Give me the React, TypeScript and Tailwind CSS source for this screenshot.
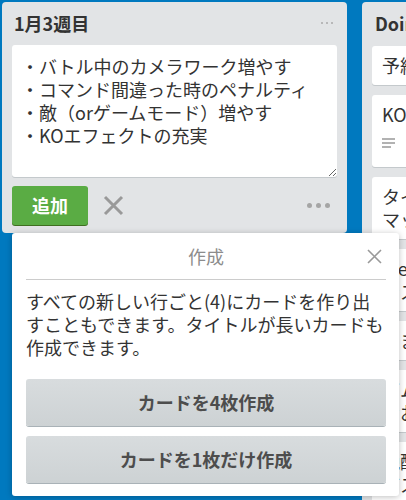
import React from "react";

const doingCards = [
  { text: "予約システム" },
  { text: "KOの演出", desc: true },
  { text: "タイトル画面\nマッチング" },
  { text: "Webでの公開\nテスト" },
  { text: "しまう" },
  { text: "ボムの調整\nなおす" },
  { text: "晩酌\nバス" },
];

const Dots = ({ className, r, gap }: { className?: string; r: number; gap: number }) => (
  <svg className={className} width={gap * 2 + r * 2} height={r * 2} viewBox={`0 0 ${gap * 2 + r * 2} ${r * 2}`}>
    <circle cx={r} cy={r} r={r} fill="currentColor" />
    <circle cx={r + gap} cy={r} r={r} fill="currentColor" />
    <circle cx={r + gap * 2} cy={r} r={r} fill="currentColor" />
  </svg>
);

export default function App() {
  return (
    <div className="relative h-[500px] w-[406px] overflow-hidden bg-[#0079bf] font-['Noto_Sans_CJK_JP',sans-serif]">
      <div className="flex items-start gap-[15px] pl-[2px] pt-[2px]">
        {/* List being edited */}
        <div className="w-[345px] shrink-0 rounded-[4px] bg-[#e2e4e6] px-[10px] pb-[8px]">
          <div className="flex items-center justify-between pb-[11px] pl-[2px] pr-[4px] pt-[10px]">
            <h2 className="text-[18px] font-bold leading-[22px] text-[#333]">1月3週目</h2>
            <Dots className="text-[#aaa]" r={1} gap={5} />
          </div>
          <textarea
            readOnly
            defaultValue={"・バトル中のカメラワーク増やす\n・コマンド間違った時のペナルティ\n・敵（orゲームモード）増やす\n・KOエフェクトの充実"}
            className="block h-[132px] w-full rounded-[3px] bg-white px-[9px] py-[10px] text-[18px] leading-[23px] text-[#333] shadow-[0_1px_0_#c4c9cc] outline-none"
          />
          <div className="mt-[9px] flex items-center">
            <button className="h-[39px] w-[76px] rounded-[3px] bg-[#5aac44] text-[18px] font-bold text-white shadow-[0_1px_0_#3f6f21]">
              追加
            </button>
            <svg className="ml-[15px] text-[#999]" width="21" height="21" viewBox="0 0 21 21">
              <path d="M2 2L19 19M19 2L2 19" stroke="currentColor" strokeWidth="3" />
            </svg>
            <Dots className="ml-auto mr-[7px] text-[#a5a5a5]" r={2.5} gap={9} />
          </div>
        </div>

        {/* Doing list */}
        <div className="w-[345px] shrink-0 rounded-[4px] bg-[#e2e4e6] px-[10px]">
          <h2 className="pb-[12px] pl-[3px] pt-[10px] text-[18px] font-bold leading-[22px] text-[#333]">Doing</h2>
          <div className="flex flex-col gap-[10px]">
            {doingCards.map((c, i) => (
              <div key={i} className="rounded-[3px] bg-white px-[10px] py-[8px] shadow-[0_1px_0_#c4c9cc]">
                <p className="whitespace-pre-line text-[18px] leading-[23px] text-[#333]">{c.text}</p>
                {c.desc && (
                  <div className="mb-[3px] mt-[4px] flex h-[26px] items-center">
                    <svg width="13" height="10" viewBox="0 0 13 10" className="text-[#999]">
                      <path d="M0 1H13M0 5H13M0 9H9" stroke="currentColor" strokeWidth="1.6" />
                    </svg>
                  </div>
                )}
              </div>
            ))}
          </div>
        </div>
      </div>

      {/* Create cards popover */}
      <div className="absolute left-[12px] top-[233px] w-[387px] rounded-[3px] bg-white pb-[13px] pl-[14px] pr-[13px] shadow-[0_1px_6px_rgba(0,0,0,0.25)]">
        <div className="relative flex h-[47px] items-center justify-center border-b border-[#ccc]">
          <span className="text-[18px] leading-[22px] text-[#8c8c8c]">作成</span>
          <svg className="absolute right-[4px] top-[16px] text-[#999]" width="15" height="15" viewBox="0 0 15 15">
            <path d="M1 1L14 14M14 1L1 14" stroke="currentColor" strokeWidth="1.6" />
          </svg>
        </div>
        <p className="pt-[10px] text-[18px] leading-[23px] text-[#333]">
          すべての新しい行ごと(4)にカードを作り出すこともできます。タイトルが長いカードも作成できます。
        </p>
        <div className="mt-[20px] flex flex-col gap-[10px]">
          <button className="h-[47px] w-full rounded-[3px] bg-gradient-to-b from-[#d8dcde] to-[#cdd2d4] text-[18px] font-bold text-[#4d4d4d] shadow-[0_1px_0_#a9b2b7]">
            カードを4枚作成
          </button>
          <button className="h-[47px] w-full rounded-[3px] bg-gradient-to-b from-[#d8dcde] to-[#cdd2d4] text-[18px] font-bold text-[#4d4d4d] shadow-[0_1px_0_#a9b2b7]">
            カードを1枚だけ作成
          </button>
        </div>
      </div>
    </div>
  );
}
